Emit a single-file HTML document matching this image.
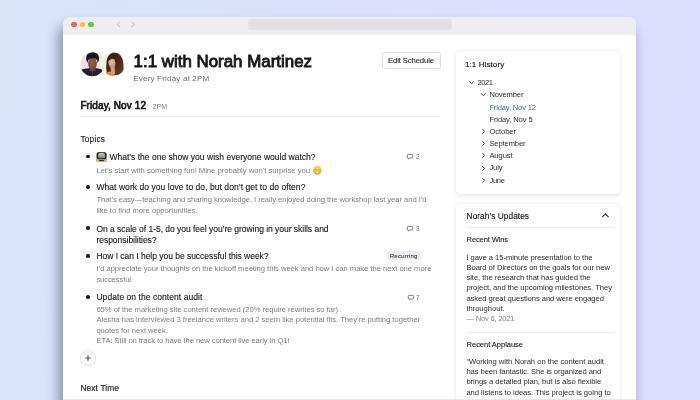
<!DOCTYPE html>
<html><head><meta charset="utf-8">
<style>
*{box-sizing:border-box;margin:0;padding:0}
html,body{width:700px;height:400px;overflow:hidden}
body{font-family:"Liberation Sans",sans-serif;background:linear-gradient(95deg,#d8e5f9 0%,#d9e1fa 35%,#dcdffd 70%,#dedffe 100%);position:relative}
.sh{position:absolute;left:63px;top:22px;width:573px;height:420px;border-radius:9px;box-shadow:0 4px 14px 0 rgba(70,80,150,.2),-5px 4px 12px 0 rgba(35,45,60,.36)}
.win{will-change:transform;position:absolute;left:63px;top:17px;width:573px;height:383px;background:#fff;border-radius:8px 8px 0 0;overflow:hidden}
.bar{position:absolute;left:0;top:0;width:100%;height:17.500px;background:#eeeef0}
.dot{position:absolute;top:4.600px;width:5.400px;height:5.400px;border-radius:50%}
.url{position:absolute;left:185.200px;top:1.500px;width:203.800px;height:11.200px;border-radius:3px;background:#e1e1e4}
.x{position:absolute;white-space:nowrap;line-height:1}
.btn{position:absolute;left:318.500px;top:35px;width:59px;height:17px;border:1px solid #dfdfe2;border-radius:3px;background:#fff}
.hr{position:absolute;height:1px;background:#e9e9ec}
.b{position:absolute;left:23.200px;width:3.600px;height:3.600px;border-radius:50%;background:#1a1a1e}
.card{position:absolute;left:393.300px;width:163.800px;background:#fff;border-radius:4.500px;box-shadow:0 0 0 .6px #efeff2,0 1.500px 4px rgba(20,20,40,.10)}
svg{position:absolute;overflow:visible}
</style></head><body>
<div class="sh"></div>
<div class="win">
  <div class="bar">
    <div class="dot" style="left:8.400px;background:#ee5f58"></div>
    <div class="dot" style="left:16.700px;background:#f5bd3b"></div>
    <div class="dot" style="left:25.200px;background:#5fc845"></div>
    <svg style="left:53px;top:4px" width="20" height="8"><path d="M4.200 0.600 L1.300 3.300 L4.200 6" fill="none" stroke="#c8c8cc" stroke-width="1.100"/><path d="M15.600 0.600 L18.500 3.300 L15.600 6" fill="none" stroke="#c8c8cc" stroke-width="1.100"/></svg>
    <div class="url"></div>
  </div>
  <svg style="left:16.500px;top:34.800px" width="48" height="26" viewBox="0 0 48 26">
  <defs>
    <clipPath id="c1"><circle cx="12.300" cy="12.200" r="12"/></clipPath>
    <clipPath id="c2"><circle cx="33.300" cy="12.100" r="11.800"/></clipPath>
    <filter id="bl" x="-10%" y="-10%" width="120%" height="120%"><feGaussianBlur stdDeviation=".35"/></filter>
    <radialGradient id="f1" cx=".45" cy=".4" r=".7"><stop offset="0" stop-color="#96624b"/><stop offset="1" stop-color="#6b4233"/></radialGradient>
    <radialGradient id="f2" cx=".4" cy=".4" r=".7"><stop offset="0" stop-color="#e8bba4"/><stop offset="1" stop-color="#c98f78"/></radialGradient>
    <linearGradient id="h2" x1="0" y1="0" x2="1" y2="1"><stop offset="0" stop-color="#2e1812"/><stop offset=".55" stop-color="#4c281d"/><stop offset="1" stop-color="#6a3a2a"/></linearGradient>
  </defs>
  <circle cx="12.300" cy="12.200" r="12" fill="#f1dee8"/>
  <g clip-path="url(#c1)"><g filter="url(#bl)">
    <path d="M-1 26 L-1 18.400 Q3 16.400 8.500 16.200 L16.500 16.200 Q22 16.600 26 19 L26 26Z" fill="#1c2131"/>
    <path d="M10 14 L15 14 L15.400 18.500 Q12.500 20.500 9.600 18.500Z" fill="#6e4535"/>
    <ellipse cx="12.500" cy="11.600" rx="4.400" ry="6.100" fill="url(#f1)"/>
    <path d="M7.600 11 Q5 6.500 7.200 2.600 Q9.600 -.3 12.800 .1 Q16.800 .1 18.400 3.400 Q20 7 17.600 11 Q17.800 7.600 15.800 6.800 Q12.500 5.800 9.400 7 Q7.600 7.800 7.600 11Z" fill="#191516"/>
    <path d="M12.300 17.500 L12.700 17.500 L12.700 26 L12.300 26Z" fill="#596076"/>
  </g></g>
  <circle cx="33.300" cy="12.100" r="12.800" fill="#fff"/>
  <circle cx="33.300" cy="12.100" r="11.800" fill="#edf2d8"/>
  <g clip-path="url(#c2)"><g filter="url(#bl)">
    <path d="M27 22.500 Q25.500 16 26.600 9 Q27.600 2.500 32.500 .8 Q37.500 -.2 40.500 3.500 Q43.200 7 43.400 13 Q44 19 42.500 21.500 Q39 24 35 23 Q30 24.500 27 22.500Z" fill="url(#h2)"/>
    <path d="M22 26 Q24 20.200 29.500 19.600 L34 21.500 L34.500 26Z" fill="#dc8c2e"/>
    <path d="M30.600 14.500 L34.600 14 L35.200 21.500 Q33 23.500 30.800 21Z" fill="#cf9a83"/>
    <ellipse cx="32" cy="10.400" rx="3.700" ry="5.700" fill="url(#f2)" transform="rotate(-6 32 10.400)"/>
    <path d="M28.100 9.500 Q28 5 31.500 4.200 Q35.400 3.800 36.400 8.500 Q36.800 12 35.800 15 Q36 10 34.600 7.400 Q31.500 5.400 28.100 9.500Z" fill="#3a1f17"/>
    <path d="M30 13.300 Q31.500 14.300 33 13.100" fill="none" stroke="#a8544a" stroke-width=".5"/>
  </g></g>
</svg>

  <div class="btn"></div>
  <div class="hr" style="left:17px;top:98.500px;width:360px"></div>

  <div class="b" style="top:137.55px"></div>
  <div class="b" style="top:168.35px"></div>
  <div class="b" style="top:209.45px"></div>
  <div class="b" style="top:237.15px"></div>
  <div class="b" style="top:278.15px"></div>

  <!-- tv emoji -->
  <svg style="left:33px;top:134.800px" width="11" height="10" viewBox="0 0 11 10"><defs><linearGradient id="tvg" x1="0" y1="0" x2="0" y2="1"><stop offset="0" stop-color="#c3cecb"/><stop offset="1" stop-color="#6f817e"/></linearGradient></defs><rect x=".1" y=".5" width="10.800" height="9.400" rx="1.500" fill="#d6ad8b"/><rect x=".8" y=".3" width="9.600" height="6.900" rx="1.700" fill="#1f1c1d"/><rect x="2.100" y="1" width="7" height="5.300" rx="1.900" fill="url(#tvg)"/><rect x="3" y="8" width="5" height=".9" rx=".3" fill="#3b2a20"/><rect x=".8" y="7.200" width="9.600" height=".5" fill="#b98f6e"/></svg>
  <!-- smile emoji -->
  <svg style="left:249.900px;top:148.600px" width="8.700" height="8.700" viewBox="0 0 8.700 8.700"><defs><radialGradient id="sm" cx=".5" cy=".4" r=".6"><stop offset="0" stop-color="#fbe04a"/><stop offset=".6" stop-color="#f6c83a"/><stop offset="1" stop-color="#e39a2c"/></radialGradient></defs><circle cx="4.350" cy="4.350" r="4.300" fill="url(#sm)"/><path d="M2.200 3.700 Q2.900 3 3.600 3.700M5.100 3.700 Q5.800 3 6.500 3.700" fill="none" stroke="#8a5a14" stroke-width=".6"/><path d="M2.400 5.200 Q4.350 5.700 6.300 5.200 Q5.800 7.400 4.350 7.400 Q2.900 7.400 2.400 5.200Z" fill="#f6ecc4" stroke="#b9782a" stroke-width=".3"/></svg>

  <!-- comment icons -->
  <svg style="left:344.400px;top:137.300px" width="6" height="5.400" viewBox="0 0 6 5.400"><path d="M1.100 .4h3.800a.8.800 0 0 1 .8.800v2a.8.800 0 0 1-.8.800H2.500L1.300 5V4H1.100a.8.800 0 0 1-.8-.8v-2a.8.800 0 0 1 .8-.8Z" fill="none" stroke="#5e5e64" stroke-width=".8"/></svg>
  <svg style="left:344.400px;top:208.900px" width="6" height="5.400" viewBox="0 0 6 5.400"><path d="M1.100 .4h3.800a.8.800 0 0 1 .8.800v2a.8.800 0 0 1-.8.800H2.500L1.300 5V4H1.100a.8.800 0 0 1-.8-.8v-2a.8.800 0 0 1 .8-.8Z" fill="none" stroke="#5e5e64" stroke-width=".8"/></svg>
  <svg style="left:345px;top:277.600px" width="6" height="5.400" viewBox="0 0 6 5.400"><path d="M1.100 .4h3.800a.8.800 0 0 1 .8.800v2a.8.800 0 0 1-.8.800H2.500L1.300 5V4H1.100a.8.800 0 0 1-.8-.8v-2a.8.800 0 0 1 .8-.8Z" fill="none" stroke="#5e5e64" stroke-width=".8"/></svg>

  <!-- recurring badge -->
  <div style="position:absolute;left:323.600px;top:234.200px;width:34.400px;height:8.800px;border-radius:2px;background:#eeeef2"></div>

  <!-- plus button -->
  <svg style="left:16.700px;top:333.100px" width="16" height="16" viewBox="0 0 16 16"><circle cx="8" cy="8" r="7.600" fill="#fff" stroke="#dadade" stroke-width=".8"/><path d="M8 5.200V10.800M5.200 8H10.800" stroke="#4a4a50" stroke-width="1.100"/></svg>

  <!-- cards -->
  <div class="card" style="top:34.200px;height:143.300px"></div>
  <div class="card" style="top:186.600px;height:240px"></div>
  <div class="hr" style="left:403.600px;top:210px;width:147px;background:#ededf0"></div>
  <div class="hr" style="left:403.600px;top:314.600px;width:147px;background:#ededf0"></div>
  <!-- chevrons -->
  <svg style="left:405.600px;top:63.800px" width="5" height="3"><path d="M.2 .4 L2.500 2.600 L4.800 .4" fill="none" stroke="#3e3e44" stroke-width="1"/></svg>
  <svg style="left:418px;top:76px" width="5" height="3"><path d="M.2 .4 L2.500 2.600 L4.800 .4" fill="none" stroke="#3e3e44" stroke-width="1"/></svg>
  <svg style="left:418.600px;top:112.0px" width="3" height="5"><path d="M.4 .2 L2.600 2.400 L.4 4.600" fill="none" stroke="#3e3e44" stroke-width="1"/></svg>
<svg style="left:418.600px;top:124.0px" width="3" height="5"><path d="M.4 .2 L2.600 2.400 L.4 4.600" fill="none" stroke="#3e3e44" stroke-width="1"/></svg>
<svg style="left:418.600px;top:136.4px" width="3" height="5"><path d="M.4 .2 L2.600 2.400 L.4 4.600" fill="none" stroke="#3e3e44" stroke-width="1"/></svg>
<svg style="left:418.600px;top:148.8px" width="3" height="5"><path d="M.4 .2 L2.600 2.400 L.4 4.600" fill="none" stroke="#3e3e44" stroke-width="1"/></svg>
<svg style="left:418.600px;top:161.0px" width="3" height="5"><path d="M.4 .2 L2.600 2.400 L.4 4.600" fill="none" stroke="#3e3e44" stroke-width="1"/></svg>

  <svg style="left:539.400px;top:196.400px" width="7" height="4.500"><path d="M.3 4 L3.400 .9 L6.500 4" fill="none" stroke="#3a3a40" stroke-width="1.150"/></svg>

  <div class="x" style="left:70.6px;top:37px;font-size:16.9px;letter-spacing:0.001px;color:#17171b;-webkit-text-stroke:0.85px #17171b;">1:1 with Norah Martinez</div>
<div class="x" style="left:70.3px;top:58px;font-size:8.1px;letter-spacing:0.148px;color:#6e6e73;">Every Friday at 2PM</div>
<div class="x" style="left:325.0px;top:40px;font-size:7.6px;letter-spacing:-0.073px;color:#222226;-webkit-text-stroke:0.1px #222226;">Edit Schedule</div>
<div class="x" style="left:17.4px;top:84px;font-size:10.0px;letter-spacing:0.100px;color:#17171b;-webkit-text-stroke:0.65px #17171b;">Friday, Nov 12</div>
<div class="x" style="left:89.4px;top:86px;font-size:7px;letter-spacing:0.097px;color:#7c7c82;">2PM</div>
<div class="x" style="left:17.4px;top:118px;font-size:8.3px;letter-spacing:0.214px;color:#1a1a1e;-webkit-text-stroke:0.1px #1a1a1e;">Topics</div>
<div class="x" style="left:46.4px;top:136px;font-size:8.55px;letter-spacing:-0.006px;color:#1a1a1e;-webkit-text-stroke:0.12px #1a1a1e;">What’s the one show you wish everyone would watch?</div>
<div class="x" style="left:33.4px;top:150px;font-size:7.65px;letter-spacing:-0.019px;color:#808086;">Let’s start with something fun! Mine probably won’t surprise you</div>
<div class="x" style="left:33.4px;top:166px;font-size:8.55px;letter-spacing:0.034px;color:#1a1a1e;-webkit-text-stroke:0.12px #1a1a1e;">What work do you love to do, but don’t get to do often?</div>
<div class="x" style="left:33.4px;top:179px;font-size:7.65px;letter-spacing:-0.063px;color:#808086;">That’s easy—teaching and sharing knowledge. I really enjoyed doing the workshop last year and I’d</div>
<div class="x" style="left:33.4px;top:190px;font-size:7.65px;letter-spacing:-0.030px;color:#808086;">like to find more opportunities.</div>
<div class="x" style="left:33.4px;top:208px;font-size:8.55px;letter-spacing:-0.047px;color:#1a1a1e;-webkit-text-stroke:0.12px #1a1a1e;">On a scale of 1-5, do you feel you’re growing in your skills and</div>
<div class="x" style="left:33.4px;top:219px;font-size:8.55px;letter-spacing:-0.038px;color:#1a1a1e;-webkit-text-stroke:0.12px #1a1a1e;">responsibilities?</div>
<div class="x" style="left:33.4px;top:235px;font-size:8.55px;letter-spacing:-0.049px;color:#1a1a1e;-webkit-text-stroke:0.12px #1a1a1e;">How I can I help you be successful this week?</div>
<div class="x" style="left:33.4px;top:248px;font-size:7.65px;letter-spacing:-0.039px;color:#808086;">I’d appreciate your thoughts on the kickoff meeting this week and how I can make the next one more</div>
<div class="x" style="left:33.4px;top:259px;font-size:7.65px;letter-spacing:-0.120px;color:#808086;">successful.</div>
<div class="x" style="left:33.4px;top:276px;font-size:8.55px;letter-spacing:0.037px;color:#1a1a1e;-webkit-text-stroke:0.12px #1a1a1e;">Update on the content audit</div>
<div class="x" style="left:33.4px;top:289px;font-size:7.65px;letter-spacing:-0.043px;color:#808086;">65% of the marketing site content reviewed (20% require rewrites so far)</div>
<div class="x" style="left:33.4px;top:299px;font-size:7.65px;letter-spacing:-0.027px;color:#808086;">Alesha has interviewed 3 freelance writers and 2 seem like potential fits. They’re putting together</div>
<div class="x" style="left:33.4px;top:310px;font-size:7.65px;letter-spacing:-0.062px;color:#808086;">quotes for next week.</div>
<div class="x" style="left:33.4px;top:320px;font-size:7.65px;letter-spacing:-0.083px;color:#808086;">ETA: Still on track to have the new content live early in Q1!</div>
<div class="x" style="left:17.4px;top:367px;font-size:8.3px;letter-spacing:0.155px;color:#1a1a1e;-webkit-text-stroke:0.14px #1a1a1e;">Next Time</div>
<div class="x" style="left:353.0px;top:137px;font-size:6.6px;letter-spacing:0.000px;color:#6e6e73;">2</div>
<div class="x" style="left:353.0px;top:209px;font-size:6.6px;letter-spacing:0.000px;color:#6e6e73;">3</div>
<div class="x" style="left:353.0px;top:278px;font-size:6.6px;letter-spacing:0.000px;color:#6e6e73;">7</div>
<div class="x" style="left:326.8px;top:236px;font-size:6.1px;letter-spacing:0.147px;color:#303035;-webkit-text-stroke:0.05px #303035;">Recurring</div>
<div class="x" style="left:402.0px;top:44px;font-size:8.1px;letter-spacing:0.051px;color:#1a1a1e;-webkit-text-stroke:0.16px #1a1a1e;">1:1 History</div>
<div class="x" style="left:414.4px;top:62px;font-size:7.55px;letter-spacing:-0.399px;color:#2e2e33;">2021</div>
<div class="x" style="left:426.4px;top:74px;font-size:7.55px;letter-spacing:-0.116px;color:#2e2e33;">November</div>
<div class="x" style="left:426.4px;top:87px;font-size:7.55px;letter-spacing:-0.147px;color:#2b6cb8;">Friday, Nov 12</div>
<div class="x" style="left:426.4px;top:99px;font-size:7.55px;letter-spacing:-0.094px;color:#2e2e33;">Friday, Nov 5</div>
<div class="x" style="left:426.4px;top:111px;font-size:7.55px;letter-spacing:-0.043px;color:#2e2e33;">October</div>
<div class="x" style="left:426.4px;top:123px;font-size:7.55px;letter-spacing:-0.090px;color:#2e2e33;">September</div>
<div class="x" style="left:426.4px;top:135px;font-size:7.55px;letter-spacing:-0.060px;color:#2e2e33;">August</div>
<div class="x" style="left:426.4px;top:147px;font-size:7.55px;letter-spacing:-0.074px;color:#2e2e33;">July</div>
<div class="x" style="left:426.4px;top:160px;font-size:7.55px;letter-spacing:-0.258px;color:#2e2e33;">June</div>
<div class="x" style="left:403.6px;top:195px;font-size:8.3px;letter-spacing:0.053px;color:#1a1a1e;-webkit-text-stroke:0.14px #1a1a1e;">Norah’s Updates</div>
<div class="x" style="left:403.6px;top:219px;font-size:7.5px;letter-spacing:-0.112px;color:#1a1a1e;-webkit-text-stroke:0.1px #1a1a1e;">Recent Wins</div>
<div class="x" style="left:403.4px;top:237px;font-size:7.65px;letter-spacing:-0.068px;color:#2e2e33;">I gave a 15-minute presentation to the</div>
<div class="x" style="left:403.4px;top:247px;font-size:7.65px;letter-spacing:-0.050px;color:#2e2e33;">Board of Directors on the goals for our new</div>
<div class="x" style="left:403.4px;top:257px;font-size:7.65px;letter-spacing:-0.041px;color:#2e2e33;">site, the research that has guided the</div>
<div class="x" style="left:403.4px;top:267px;font-size:7.65px;letter-spacing:-0.051px;color:#2e2e33;">project, and the upcoming milestones. They</div>
<div class="x" style="left:403.4px;top:278px;font-size:7.65px;letter-spacing:-0.070px;color:#2e2e33;">asked great questions and were engaged</div>
<div class="x" style="left:403.4px;top:288px;font-size:7.65px;letter-spacing:-0.047px;color:#2e2e33;">throughout.</div>
<div class="x" style="left:403.4px;top:298px;font-size:7.65px;letter-spacing:-0.231px;color:#85858a;">— Nov 6, 2021</div>
<div class="x" style="left:403.6px;top:324px;font-size:7.5px;letter-spacing:-0.023px;color:#1a1a1e;-webkit-text-stroke:0.1px #1a1a1e;">Recent Applause</div>
<div class="x" style="left:403.4px;top:341px;font-size:7.65px;letter-spacing:-0.019px;color:#2e2e33;">“Working with Norah on the content audit</div>
<div class="x" style="left:403.4px;top:351px;font-size:7.65px;letter-spacing:-0.081px;color:#2e2e33;">has been fantastic. She is organized and</div>
<div class="x" style="left:403.4px;top:361px;font-size:7.65px;letter-spacing:-0.054px;color:#2e2e33;">brings a detailed plan, but is also flexible</div>
<div class="x" style="left:403.4px;top:372px;font-size:7.65px;letter-spacing:-0.035px;color:#2e2e33;">and listens to ideas. This project is going to</div>
  <div class="hr" style="left:0;top:382px;width:573px;background:#e8e8ea"></div>
</div>
</body></html>
